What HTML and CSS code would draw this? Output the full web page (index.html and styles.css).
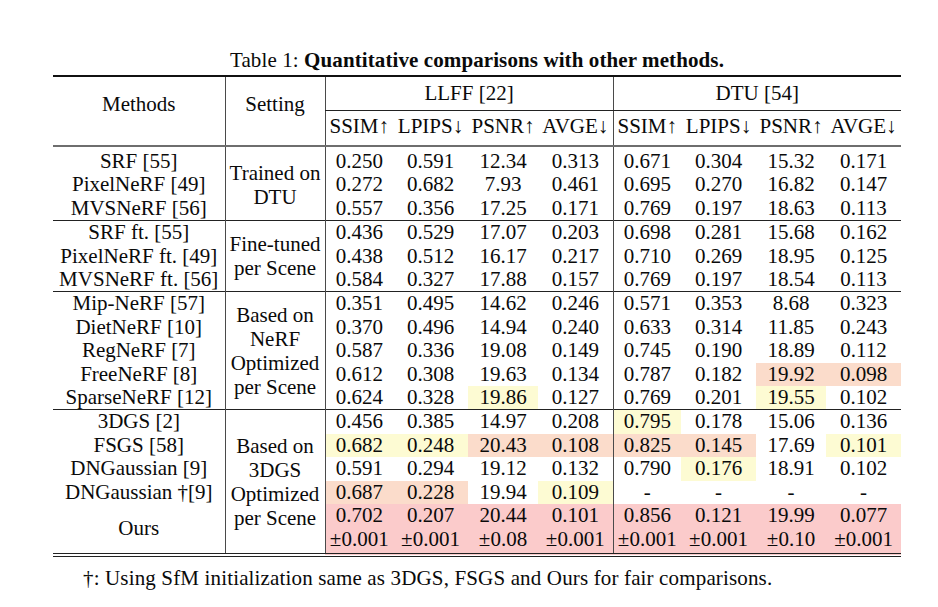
FILE: index.html
```html
<!DOCTYPE html>
<html>
<head>
<meta charset="utf-8">
<title>Table 1</title>
<link rel="stylesheet" href="styles.css">
</head>
<body>
<div class="page">
  <p class="caption">Table 1: <b>Quantitative comparisons with other methods.</b></p>
  <table class="results">
    <colgroup>
      <col class="c-m"><col class="c-s">
      <col class="c-1"><col class="c-2"><col class="c-3"><col class="c-4">
      <col class="c-1"><col class="c-2"><col class="c-3"><col class="c-4">
    </colgroup>
    <thead>
      <tr class="h1">
        <th rowspan="2" class="side">Methods</th>
        <th rowspan="2" class="side bl">Setting</th>
        <th colspan="4" class="bl grp">LLFF [22]</th>
        <th colspan="4" class="bl grp">DTU [54]</th>
      </tr>
      <tr class="h2">
        <th class="bl">SSIM↑</th><th>LPIPS↓</th><th>PSNR↑</th><th>AVGE↓</th>
        <th class="bl">SSIM↑</th><th>LPIPS↓</th><th>PSNR↑</th><th>AVGE↓</th>
      </tr>
    </thead>
    <tbody class="g1">
      <tr><td>SRF [55]</td><td rowspan="3" class="bl set">Trained on<br>DTU</td>
        <td class="bl">0.250</td><td>0.591</td><td>12.34</td><td>0.313</td>
        <td class="bl">0.671</td><td>0.304</td><td>15.32</td><td>0.171</td></tr>
      <tr><td>PixelNeRF [49]</td>
        <td class="bl">0.272</td><td>0.682</td><td>7.93</td><td>0.461</td>
        <td class="bl">0.695</td><td>0.270</td><td>16.82</td><td>0.147</td></tr>
      <tr><td>MVSNeRF [56]</td>
        <td class="bl">0.557</td><td>0.356</td><td>17.25</td><td>0.171</td>
        <td class="bl">0.769</td><td>0.197</td><td>18.63</td><td>0.113</td></tr>
    </tbody>
    <tbody>
      <tr><td>SRF ft. [55]</td><td rowspan="3" class="bl set">Fine-tuned<br>per Scene</td>
        <td class="bl">0.436</td><td>0.529</td><td>17.07</td><td>0.203</td>
        <td class="bl">0.698</td><td>0.281</td><td>15.68</td><td>0.162</td></tr>
      <tr><td>PixelNeRF ft. [49]</td>
        <td class="bl">0.438</td><td>0.512</td><td>16.17</td><td>0.217</td>
        <td class="bl">0.710</td><td>0.269</td><td>18.95</td><td>0.125</td></tr>
      <tr><td>MVSNeRF ft. [56]</td>
        <td class="bl">0.584</td><td>0.327</td><td>17.88</td><td>0.157</td>
        <td class="bl">0.769</td><td>0.197</td><td>18.54</td><td>0.113</td></tr>
    </tbody>
    <tbody>
      <tr><td>Mip-NeRF [57]</td><td rowspan="5" class="bl set">Based on<br>NeRF<br>Optimized<br>per Scene</td>
        <td class="bl">0.351</td><td>0.495</td><td>14.62</td><td>0.246</td>
        <td class="bl">0.571</td><td>0.353</td><td>8.68</td><td>0.323</td></tr>
      <tr><td>DietNeRF [10]</td>
        <td class="bl">0.370</td><td>0.496</td><td>14.94</td><td>0.240</td>
        <td class="bl">0.633</td><td>0.314</td><td>11.85</td><td>0.243</td></tr>
      <tr><td>RegNeRF [7]</td>
        <td class="bl">0.587</td><td>0.336</td><td>19.08</td><td>0.149</td>
        <td class="bl">0.745</td><td>0.190</td><td>18.89</td><td>0.112</td></tr>
      <tr><td>FreeNeRF [8]</td>
        <td class="bl">0.612</td><td>0.308</td><td>19.63</td><td>0.134</td>
        <td class="bl">0.787</td><td>0.182</td><td class="o">19.92</td><td class="o">0.098</td></tr>
      <tr><td>SparseNeRF [12]</td>
        <td class="bl">0.624</td><td>0.328</td><td class="y">19.86</td><td>0.127</td>
        <td class="bl">0.769</td><td>0.201</td><td class="y">19.55</td><td>0.102</td></tr>
    </tbody>
    <tbody class="g4">
      <tr><td>3DGS [2]</td><td rowspan="6" class="bl set set4">Based on<br>3DGS<br>Optimized<br>per Scene</td>
        <td class="bl">0.456</td><td>0.385</td><td>14.97</td><td>0.208</td>
        <td class="bl y">0.795</td><td>0.178</td><td>15.06</td><td>0.136</td></tr>
      <tr><td>FSGS [58]</td>
        <td class="bl y">0.682</td><td class="y">0.248</td><td class="o">20.43</td><td class="o">0.108</td>
        <td class="bl o">0.825</td><td class="o">0.145</td><td>17.69</td><td class="y">0.101</td></tr>
      <tr><td>DNGaussian [9]</td>
        <td class="bl">0.591</td><td>0.294</td><td>19.12</td><td>0.132</td>
        <td class="bl">0.790</td><td class="y">0.176</td><td>18.91</td><td>0.102</td></tr>
      <tr><td>DNGaussian †[9]</td>
        <td class="bl o">0.687</td><td class="o">0.228</td><td>19.94</td><td class="y">0.109</td>
        <td class="bl">-</td><td>-</td><td>-</td><td>-</td></tr>
      <tr><td rowspan="2">Ours</td>
        <td class="bl r">0.702</td><td class="r">0.207</td><td class="r">20.44</td><td class="r">0.101</td>
        <td class="bl r">0.856</td><td class="r">0.121</td><td class="r">19.99</td><td class="r">0.077</td></tr>
      <tr class="last">
        <td class="bl r">±0.001</td><td class="r">±0.001</td><td class="r">±0.08</td><td class="r">±0.001</td>
        <td class="bl r">±0.001</td><td class="r">±0.001</td><td class="r">±0.10</td><td class="r">±0.001</td></tr>
    </tbody>
  </table>
  <p class="note">†: Using SfM initialization same as 3DGS, FSGS and Ours for fair comparisons.</p>
</div>
</body>
</html>
```

FILE: styles.css
```css
body {
  margin: 0;
  background: #ffffff;
  color: #0a0a0a;
  font-family: "Liberation Serif", "Times New Roman", serif;
}

.page {
  width: 848px;
  margin-left: 53px;
  padding-top: 48px;
}

.caption {
  margin: 0 0 3px;
  height: 24px;
  line-height: 24px;
  font-size: 21px;
  text-align: center;
  letter-spacing: 0.1px;
}

.caption b {
  font-weight: bold;
}

.results {
  width: 848px;
  table-layout: fixed;
  border-collapse: collapse;
  font-size: 21px;
  border-top: 2px solid #111111;
  border-bottom: 4px double #222222;
}

.c-m { width: 172px; }
.c-s { width: 100px; }
.c-1 { width: 68px; }
.c-2 { width: 75px; }
.c-3 { width: 70px; }
.c-4 { width: 75px; }

.results th,
.results td {
  padding: 0;
  text-align: center;
  font-weight: normal;
  white-space: nowrap;
  line-height: 23.4px;
  height: 23.4px;
}

.results thead tr.h1 th {
  height: 33px;
  vertical-align: middle;
}

.results thead tr.h1 th.side {
  vertical-align: top;
  padding-top: 16px;
}

.results thead th.grp {
  border-bottom: 1px solid #222222;
}

.results thead tr.h2 th {
  height: 31px;
  vertical-align: middle;
  padding-bottom: 3px;
}

.results thead {
  border-bottom: 2px solid #6e6e6e;
}

.results .bl {
  border-left: 1px solid #4a4a4a;
}

.results tbody + tbody tr:first-child td {
  border-top: 1px solid #222222;
}

.results tbody.g1 tr:first-child td {
  padding-top: 3px;
}

.results td.set {
  line-height: 24px;
  vertical-align: middle;
}

.results tr.last td {
  padding-bottom: 2px;
}

.results td.y { background: #fdfbd3; }
.results td.o { background: #fbdccb; }
.results td.r { background: #fbcbcb; }

.note {
  margin: 9px 0 0 30px;
  font-size: 21px;
  line-height: 24px;
  letter-spacing: 0.15px;
}
```
